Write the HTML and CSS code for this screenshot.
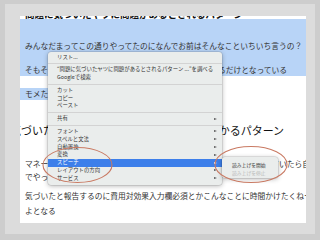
FILE: index.html
```html
<!DOCTYPE html>
<html lang="ja">
<head>
<meta charset="UTF-8">
<title>スライド</title>
<link rel="stylesheet" href="styles.css">
</head>
<body>
<div class="window">
    <div class="page">
        <div class="cut"><span>問題に気づいたヤツに問題があるとされるパターン</span></div>
        <div class="selected">
            <p>みんなだまってこの通りやってたのになんでお前はそんなこといちいち言うの？</p>
            <p>そもそも、理由も知らずに前任者のやり方を真似しているだけとなっている</p>
        </div>
        <p class="last"><span>モメたくないので黙っている</span></p>
        <h2>気づいた人だけが責められてしまうのがわかるパターン</h2>
        <p class="para">マネージャーに相談しても前例がないからと却下され黙ってやり過ごしていたら自分の責任にされる<br>でやってくれと言われて終わり</p>
        <p class="para para-b">気づいたと報告するのに費用対効果入力欄必須とかこんなことに時間かけたくねー<br>よとなる</p>
    </div>
</div>

<!-- コンテキストメニュー -->
<div class="menu">
    <div class="item">リスト...</div>
    <div class="sep"></div>
    <div class="item">“問題に気づいたヤツに問題があるとされるパターン ...”を調べる</div>
    <div class="item">Googleで検索</div>
    <div class="sep"></div>
    <div class="item">カット</div>
    <div class="item">コピー</div>
    <div class="item">ペースト</div>
    <div class="sep"></div>
    <div class="item sub">共有</div>
    <div class="sep"></div>
    <div class="item sub">フォント</div>
    <div class="item sub">スペルと文法</div>
    <div class="item sub">自動置換</div>
    <div class="item sub">変換</div>
    <div class="item sub active">スピーチ</div>
    <div class="item sub">レイアウトの方向</div>
    <div class="item sub">サービス</div>
</div>
<div class="submenu">
    <div class="item">読み上げを開始</div>
    <div class="item disabled">読み上げを停止</div>
</div>

<svg class="marks" width="320" height="240" viewBox="0 0 320 240">
    <ellipse cx="77.5" cy="165" rx="34.5" ry="17.5"/>
    <ellipse cx="251" cy="164.5" rx="36" ry="18"/>
</svg>
</body>
</html>
```

FILE: styles.css
```css
body {
    margin: 0;
    width: 320px;
    height: 240px;
    overflow: hidden;
    position: relative;
    background-color: #cdcdcd;
    font-family: "Noto Sans CJK JP", "Noto Sans", sans-serif;
}
.window {
    position: absolute;
    left: 5px;
    top: 4px;
    width: 310px;
    height: 230px;
    box-sizing: border-box;
    padding: 12px 9px 0 15px;
    background-color: #dcdcdc;
}
.page {
    height: 207px;
    overflow: hidden;
    background-color: #fff;
    color: #333;
    font-size: 7.75px;
    white-space: nowrap;
}
.page p {
    margin: 0;
}
/* 上で切れている見出し */
.cut {
    height: 3px;
    overflow: hidden;
    padding-left: 5px;
}
.cut span {
    display: block;
    margin-top: -8.5px;
    line-height: 12px;
    font-size: 9.5px;
    font-weight: bold;
    color: #111;
}
.selected {
    background-color: #b8d4f7;
    padding: 21px 0 0 5px;
}
.selected p {
    line-height: 12px;
    margin-bottom: 12px !important;
}
.last span {
    display: inline-block;
    line-height: 12px;
    padding-left: 5px;
    background-color: #b8d4f7;
}
h2 {
    margin: 22px 0 0 -15px;
    padding-left: 5px;
    font-size: 11px;
    line-height: 16px;
    font-weight: normal;
    color: #111;
}
.para {
    margin-top: 18.5px !important;
    padding-left: 5px;
    line-height: 13px;
}
.para-b {
    margin-top: 5px !important;
    line-height: 15px;
}

/* メニュー */
.menu, .submenu {
    position: absolute;
    box-sizing: border-box;
    background-color: #eaedec;
    border-radius: 3px;
    box-shadow: 0 1px 5px rgba(0,0,0,0.3), 0 0 0 0.5px rgba(0,0,0,0.15);
    color: #333;
    white-space: nowrap;
}
.menu {
    left: 48px;
    top: 52px;
    width: 174px;
    padding: 1.5px 0 2px;
    font-size: 5.4px;
}
.menu .item {
    position: relative;
    height: 7.8px;
    line-height: 7.8px;
    padding-left: 9px;
}
.menu .sub::after {
    content: "";
    position: absolute;
    right: 5px;
    top: 2.4px;
    border-left: 3px solid #555;
    border-top: 1.5px solid transparent;
    border-bottom: 1.5px solid transparent;
}
.menu .active {
    background-color: #3d7fea;
    color: #fff;
}
.menu .active::after {
    border-left-color: #fff;
}
.sep {
    height: 1px;
    margin: 2px 0;
    background-color: #d3d3d3;
}
.submenu {
    left: 222px;
    top: 157px;
    width: 56px;
    padding: 3.5px 0 1.5px;
    font-size: 4.8px;
}
.submenu .item {
    height: 8px;
    line-height: 8px;
    padding-left: 10px;
}
.submenu .disabled {
    color: #b8b8b8;
}
.marks {
    position: absolute;
    left: 0;
    top: 0;
}
.marks ellipse {
    fill: none;
    stroke: #c97a63;
    stroke-width: 1.1;
}
```
